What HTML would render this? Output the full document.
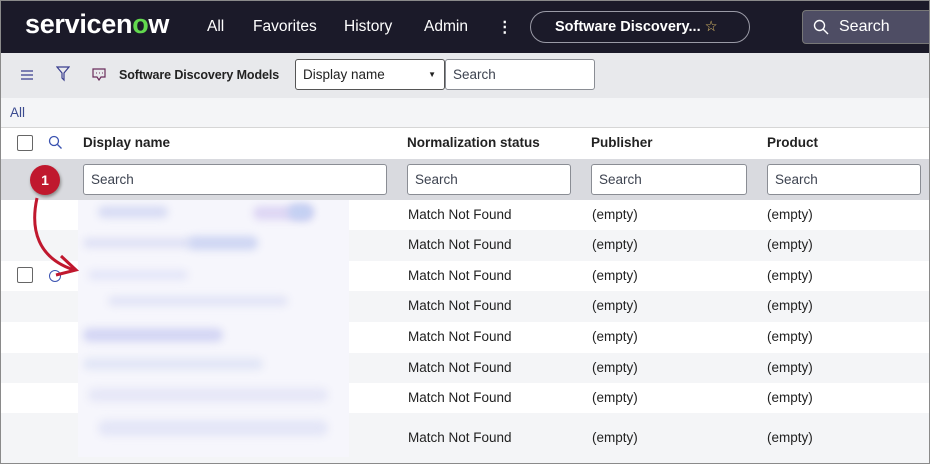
<!DOCTYPE html>
<html><head><style>
*{box-sizing:border-box;margin:0;padding:0}
body{width:930px;height:464px;overflow:hidden;font-family:"Liberation Sans",sans-serif;background:#fff;position:relative}
.abs{position:absolute}
.top{left:0;top:0;width:930px;height:53px;background:#1b1a29;color:#fff}
.nav{font-size:15.5px;top:18px}
.bar2{left:0;top:53px;width:930px;height:45px;background:#e8e9ec}
.bar3{left:0;top:98px;width:930px;height:30px;background:#f4f5f7;border-bottom:1px solid #d6d6d6}
.inp{background:#fff;border:1px solid #8a8d94;border-radius:3px;font-size:13.5px;color:#3d4350;padding-left:7px;line-height:26px;height:28px}
.hd{font-size:13.5px;font-weight:bold;color:#222;top:135px}
.row{left:0;width:930px}
.c{font-size:13.5px;color:#222}
.b{position:absolute;border-radius:8px;filter:blur(4px)}
</style></head><body>
<div class="abs top">
 <div class="abs" style="left:25px;top:9px;font-size:27px;font-weight:bold;letter-spacing:-0.3px">servicen<span style="color:#62d84e">o</span>w</div>
 <div class="abs nav" style="left:207px">All</div>
 <div class="abs nav" style="left:253px">Favorites</div>
 <div class="abs nav" style="left:344px">History</div>
 <div class="abs nav" style="left:424px">Admin</div>
 <div class="abs nav" style="left:497px;font-weight:bold">⋮</div>
 <div class="abs" style="left:530px;top:11px;width:220px;height:32px;border:1px solid #9a9aa6;border-radius:16px;font-size:14.5px;font-weight:bold;padding:7px 0 0 24px">Software Discovery... <span style="color:#e6c36a;font-weight:normal">☆</span></div>
 <div class="abs" style="left:802px;top:10px;width:140px;height:34px;background:#4e4d64;border:1px solid #777;border-radius:4px;font-size:16px;padding:7px 0 0 36px">Search
  <svg class="abs" style="left:10px;top:8px" width="16" height="16"><circle cx="6.5" cy="6.5" r="5" stroke="#fff" stroke-width="1.4" fill="none"/><path d="M10 10l5 5" stroke="#fff" stroke-width="1.4"/></svg></div>
</div>
<div class="abs bar2">
 <svg class="abs" style="left:21px;top:16px" width="13" height="12"><path d="M0 2h12M0 6h12M0 10h12" stroke="#3a3f8f" stroke-width="1.3"/></svg>
 <svg class="abs" style="left:56px;top:13px" width="14" height="16"><path d="M1 1h12l-5 6v7l-2-2v-5z" stroke="#3a3f8f" stroke-width="1.2" fill="none"/></svg>
 <svg class="abs" style="left:92px;top:15px" width="14" height="13"><path d="M1 1h12v8h-4l-2 3-2-3h-4z" stroke="#6a2d5b" stroke-width="1.2" fill="none"/><path d="M4 5h1M7 5h1M10 5h1" stroke="#6a2d5b"/></svg>
 <div class="abs" style="left:119px;top:15px;font-size:12.5px;font-weight:bold;color:#222;letter-spacing:-0.1px">Software Discovery Models</div>
 <div class="abs inp" style="left:295px;top:6px;width:150px;height:31px;line-height:29px;color:#222;border-color:#555">Display name<span class="abs" style="right:8px;top:0;font-size:8px">▼</span></div>
 <div class="abs inp" style="left:445px;top:6px;width:150px;height:31px;line-height:29px">Search</div>
</div>
<div class="abs bar3"><div class="abs" style="left:10px;top:7px;font-size:13.5px;color:#3a4a8f">All</div></div>
<div class="abs" style="left:17px;top:135px;width:16px;height:16px;border:1px solid #666;border-radius:2px;background:#fff"></div>
<svg class="abs" style="left:48px;top:135px" width="15" height="15"><circle cx="6" cy="6" r="4.5" stroke="#3a52b0" stroke-width="1.3" fill="none"/><path d="M9.5 9.5l4 4" stroke="#3a52b0" stroke-width="1.3"/></svg>
<div class="abs hd" style="left:83px">Display name</div>
<div class="abs hd" style="left:407px">Normalization status</div>
<div class="abs hd" style="left:591px">Publisher</div>
<div class="abs hd" style="left:767px">Product</div>
<div class="abs row" style="top:159px;height:41px;background:#d9dadf"></div>
<div class="abs inp" style="left:83px;top:164px;width:304px;height:31px;line-height:29px">Search</div>
<div class="abs inp" style="left:407px;top:164px;width:164px;height:31px;line-height:29px">Search</div>
<div class="abs inp" style="left:591px;top:164px;width:156px;height:31px;line-height:29px">Search</div>
<div class="abs inp" style="left:767px;top:164px;width:154px;height:31px;line-height:29px">Search</div>
<div class="abs row" style="top:230px;height:31px;background:#f4f5f7"></div>
<div class="abs row" style="top:291px;height:31px;background:#f4f5f7"></div>
<div class="abs row" style="top:353px;height:30px;background:#f4f5f7"></div>
<div class="abs row" style="top:413px;height:51px;background:#f4f5f7"></div>
<div class="abs" style="left:78px;top:200px;width:271px;height:257px;background:#f6f6fc;overflow:hidden">
 <div class="b" style="left:20px;top:6px;width:70px;height:12px;background:#d8dcf4"></div>
 <div class="b" style="left:175px;top:6px;width:60px;height:14px;background:#ddd6f4"></div>
 <div class="b" style="left:210px;top:4px;width:25px;height:16px;background:#c3d0f2"></div>
 <div class="b" style="left:5px;top:38px;width:110px;height:10px;background:#dfe1f5"></div>
 <div class="b" style="left:110px;top:36px;width:70px;height:14px;background:#cfd6f3"></div>
 <div class="b" style="left:10px;top:70px;width:100px;height:10px;background:#e4e6f8"></div>
 <div class="b" style="left:30px;top:96px;width:180px;height:10px;background:#e2e4f6"></div>
 <div class="b" style="left:5px;top:128px;width:140px;height:14px;background:#d4d6f4"></div>
 <div class="b" style="left:5px;top:158px;width:180px;height:12px;background:#e2e6f6"></div>
 <div class="b" style="left:10px;top:188px;width:240px;height:14px;background:#e6e7f7"></div>
 <div class="b" style="left:20px;top:220px;width:230px;height:16px;background:#e4e6f7"></div>
</div>
<div class="abs" style="left:17px;top:267px;width:16px;height:16px;border:1px solid #666;border-radius:2px;background:#fff"></div>
<div class="abs" style="left:49px;top:270px;width:12px;height:12px;border:1.3px solid #3a52b0;border-radius:50%"></div>
<svg class="abs" style="left:28px;top:190px" width="60" height="92"><path d="M9 8C2 40 10 68 46 80" stroke="#c0182e" stroke-width="3" fill="none"/><path d="M33 66l15 14-20 5" stroke="#c0182e" stroke-width="3" fill="none"/></svg>
<div class="abs" style="left:30px;top:165px;width:30px;height:30px;border-radius:50%;background:#c0182e;color:#fff;font-weight:bold;font-size:14px;text-align:center;line-height:30px;box-shadow:1px 2px 3px #888">1</div>
<div class="abs c" style="left:408px;top:207px">Match Not Found</div><div class="abs c" style="left:592px;top:207px">(empty)</div><div class="abs c" style="left:767px;top:207px">(empty)</div>
<div class="abs c" style="left:408px;top:237px">Match Not Found</div><div class="abs c" style="left:592px;top:237px">(empty)</div><div class="abs c" style="left:767px;top:237px">(empty)</div>
<div class="abs c" style="left:408px;top:268px">Match Not Found</div><div class="abs c" style="left:592px;top:268px">(empty)</div><div class="abs c" style="left:767px;top:268px">(empty)</div>
<div class="abs c" style="left:408px;top:298px">Match Not Found</div><div class="abs c" style="left:592px;top:298px">(empty)</div><div class="abs c" style="left:767px;top:298px">(empty)</div>
<div class="abs c" style="left:408px;top:329px">Match Not Found</div><div class="abs c" style="left:592px;top:329px">(empty)</div><div class="abs c" style="left:767px;top:329px">(empty)</div>
<div class="abs c" style="left:408px;top:360px">Match Not Found</div><div class="abs c" style="left:592px;top:360px">(empty)</div><div class="abs c" style="left:767px;top:360px">(empty)</div>
<div class="abs c" style="left:408px;top:390px">Match Not Found</div><div class="abs c" style="left:592px;top:390px">(empty)</div><div class="abs c" style="left:767px;top:390px">(empty)</div>
<div class="abs c" style="left:408px;top:430px">Match Not Found</div><div class="abs c" style="left:592px;top:430px">(empty)</div><div class="abs c" style="left:767px;top:430px">(empty)</div>
<div class="abs" style="left:0;top:0;width:930px;height:464px;border:1px solid #8a8a8a;pointer-events:none"></div>
</body></html>
